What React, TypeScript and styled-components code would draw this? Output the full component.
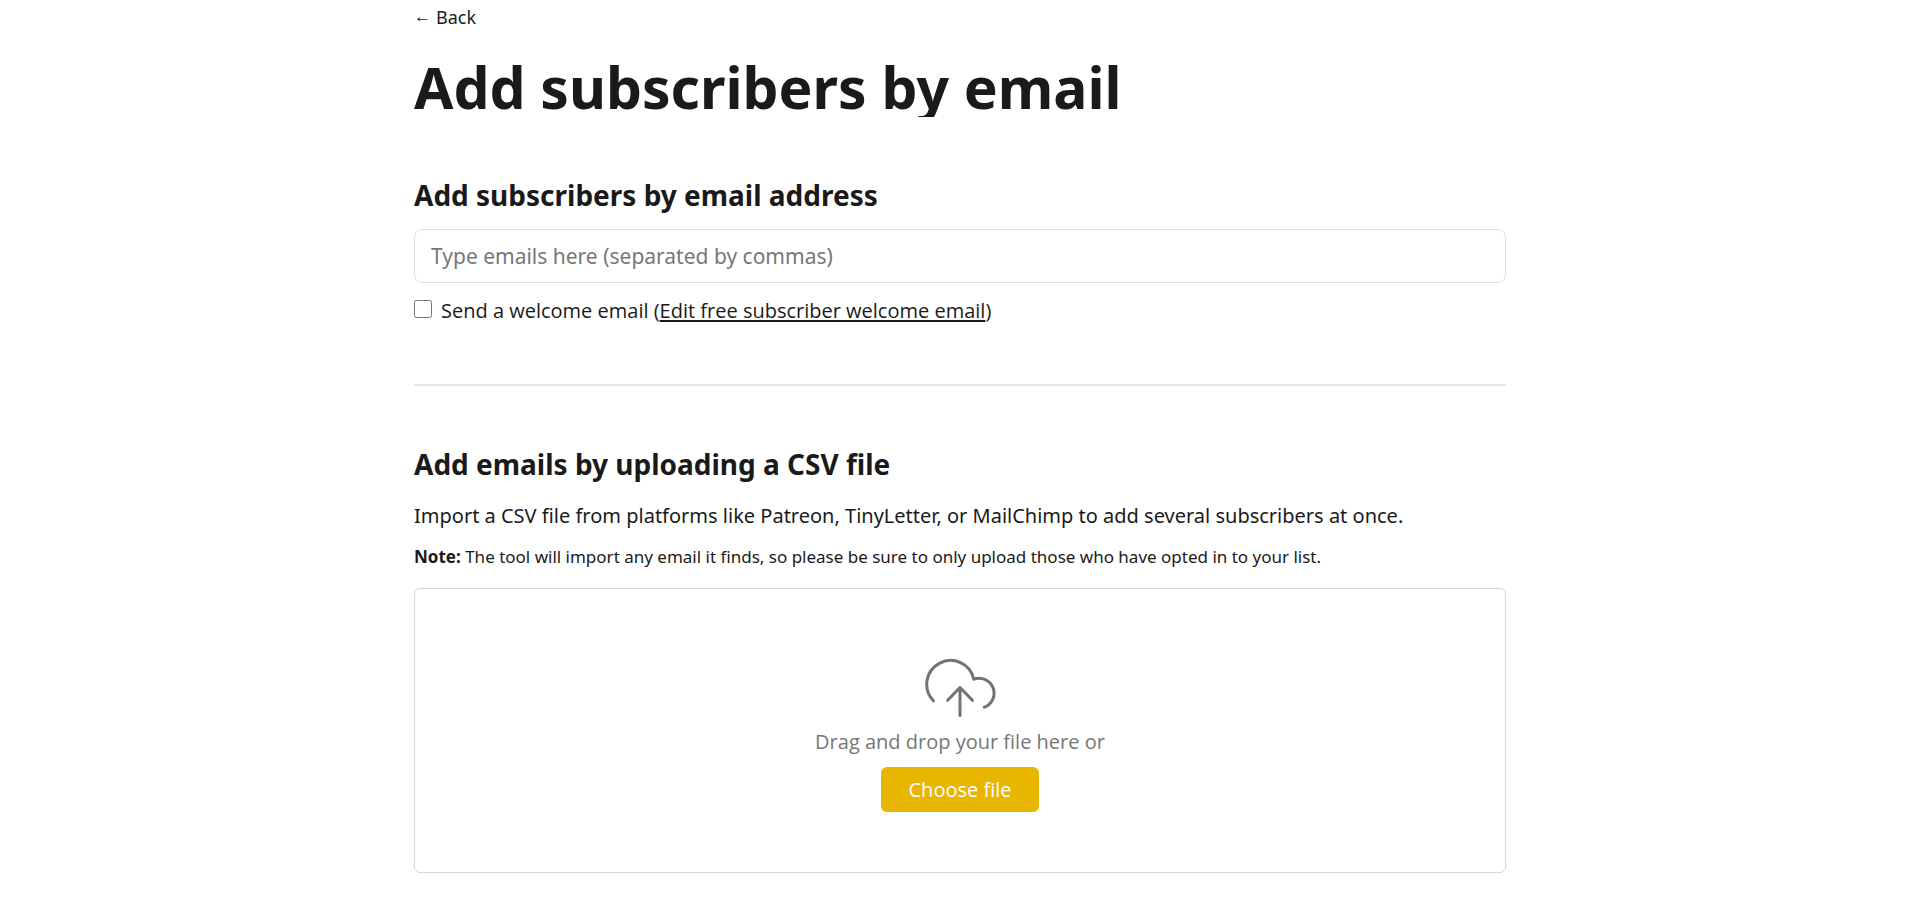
import React, { useRef, useState } from 'react';
import styled, { createGlobalStyle } from 'styled-components';

const ink = '#1a1a1a';
const muted = '#777777';
const bodyFont = '"Noto Sans", "Open Sans", sans-serif';
const controlFont = '"Open Sans", "Noto Sans", sans-serif';

const GlobalStyle = createGlobalStyle`
  *, *::before, *::after { box-sizing: border-box; }
  body {
    margin: 0;
    background: #ffffff;
    color: ${ink};
    font-family: ${bodyFont};
  }
`;

const Page = styled.main`
  max-width: 1132px;
  margin: 0 auto;
  padding: 5px 20px 28px;
`;

const BackLink = styled.a`
  display: inline-flex;
  gap: 5px;
  color: ${ink};
  font-size: 18px;
  line-height: 24px;
  text-decoration: none;
`;

const BackArrow = styled.span`
  font-family: "Liberation Sans", sans-serif;
  font-size: 17px;
`;

const Title = styled.h1`
  margin: 28px 0 60px;
  overflow: hidden;
  font-size: 57px;
  font-weight: 700;
  line-height: 60px;
`;

const Heading = styled.h2`
  margin: 0 0 16px;
  font-size: 28px;
  font-weight: 700;
  line-height: 36px;
`;

const EmailInput = styled.input`
  display: block;
  width: 100%;
  height: 54px;
  padding: 0 16px;
  border: 1px solid #dcdcdc;
  border-radius: 8px;
  background: #ffffff;
  color: ${ink};
  font-family: ${bodyFont};
  font-size: 21px;

  &::placeholder { color: ${muted}; opacity: 1; }
`;

const WelcomeRow = styled.div`
  display: flex;
  align-items: flex-start;
  gap: 9px;
  margin-top: 14px;
  font-family: ${controlFont};
  font-size: 20px;
  line-height: 28px;
`;

const Checkbox = styled.input`
  flex: none;
  width: 18px;
  height: 18px;
  margin: 3px 0 0;
`;

const TextLink = styled.a`
  color: ${ink};
  text-decoration: underline;
  text-decoration-thickness: 2px;
  text-underline-offset: 2px;
  text-decoration-skip-ink: none;
`;

const Divider = styled.hr`
  height: 2px;
  margin: 59px 0 60px;
  border: 0;
  background: #e6e6e6;
`;

const Paragraph = styled.p`
  margin: 0 0 9px;
  font-size: 20px;
  line-height: 36px;
`;

const Note = styled.p`
  margin: 0 0 17px;
  font-size: 17px;
  line-height: 28px;
`;

const DropZone = styled.div<{ $active: boolean }>`
  display: flex;
  flex-direction: column;
  align-items: center;
  padding: 60px 20px;
  border: 1px solid ${(p) => (p.$active ? '#e8b500' : '#d6d6d6')};
  border-radius: 6px;
`;

const DropText = styled.p`
  margin: 5px 0 9px;
  color: ${muted};
  font-family: ${controlFont};
  font-size: 20px;
  line-height: 32px;
`;

const ChooseButton = styled.button`
  height: 45px;
  padding: 0 28px;
  border: 0;
  border-radius: 6px;
  background: #e8b500;
  color: #ffffff;
  font-family: ${controlFont};
  font-size: 20px;
  cursor: pointer;
`;

const CloudUpload = () => (
  <svg
    width="72"
    height="72"
    viewBox="0 0 72 72"
    fill="none"
    stroke="#78716c"
    strokeWidth="3"
    strokeLinecap="round"
    strokeLinejoin="round"
    aria-hidden="true"
  >
    <path d="M9.4 51.8A23.8 23.8 0 1 1 49.8 30.2A14.6 14.6 0 0 1 60.4 58.2" />
    <path d="M36 66.5V38.5M23.7 51.3L36 38.5L48.4 51.3" />
  </svg>
);

export default function App() {
  const [emails, setEmails] = useState('');
  const [welcome, setWelcome] = useState(false);
  const [dragging, setDragging] = useState(false);
  const picker = useRef<HTMLInputElement>(null);

  return (
    <>
      <GlobalStyle />
      <Page>
        <BackLink href="#subscribers">
          <BackArrow>←</BackArrow>
          <span>Back</span>
        </BackLink>
        <Title>Add subscribers by email</Title>

        <section>
          <Heading id="by-address">Add subscribers by email address</Heading>
          <EmailInput
            type="text"
            aria-labelledby="by-address"
            placeholder="Type emails here (separated by commas)"
            value={emails}
            onChange={(e) => setEmails(e.target.value)}
          />
          <WelcomeRow>
            <Checkbox
              id="welcome"
              type="checkbox"
              checked={welcome}
              onChange={(e) => setWelcome(e.target.checked)}
            />
            <label htmlFor="welcome">
              Send a welcome email (<TextLink href="#welcome-email">Edit free subscriber welcome email</TextLink>)
            </label>
          </WelcomeRow>
        </section>

        <Divider />

        <section>
          <Heading>Add emails by uploading a CSV file</Heading>
          <Paragraph>
            Import a CSV file from platforms like Patreon, TinyLetter, or MailChimp to add several subscribers at once.
          </Paragraph>
          <Note>
            <strong>Note:</strong> The tool will import any email it finds, so please be sure to only upload those who have opted in to your list.
          </Note>
          <DropZone
            $active={dragging}
            onDragOver={(e) => {
              e.preventDefault();
              setDragging(true);
            }}
            onDragLeave={() => setDragging(false)}
            onDrop={(e) => {
              e.preventDefault();
              setDragging(false);
            }}
          >
            <CloudUpload />
            <DropText>Drag and drop your file here or</DropText>
            <ChooseButton type="button" onClick={() => picker.current?.click()}>
              Choose file
            </ChooseButton>
            <input ref={picker} type="file" accept=".csv" aria-label="CSV file" hidden />
          </DropZone>
        </section>
      </Page>
    </>
  );
}
